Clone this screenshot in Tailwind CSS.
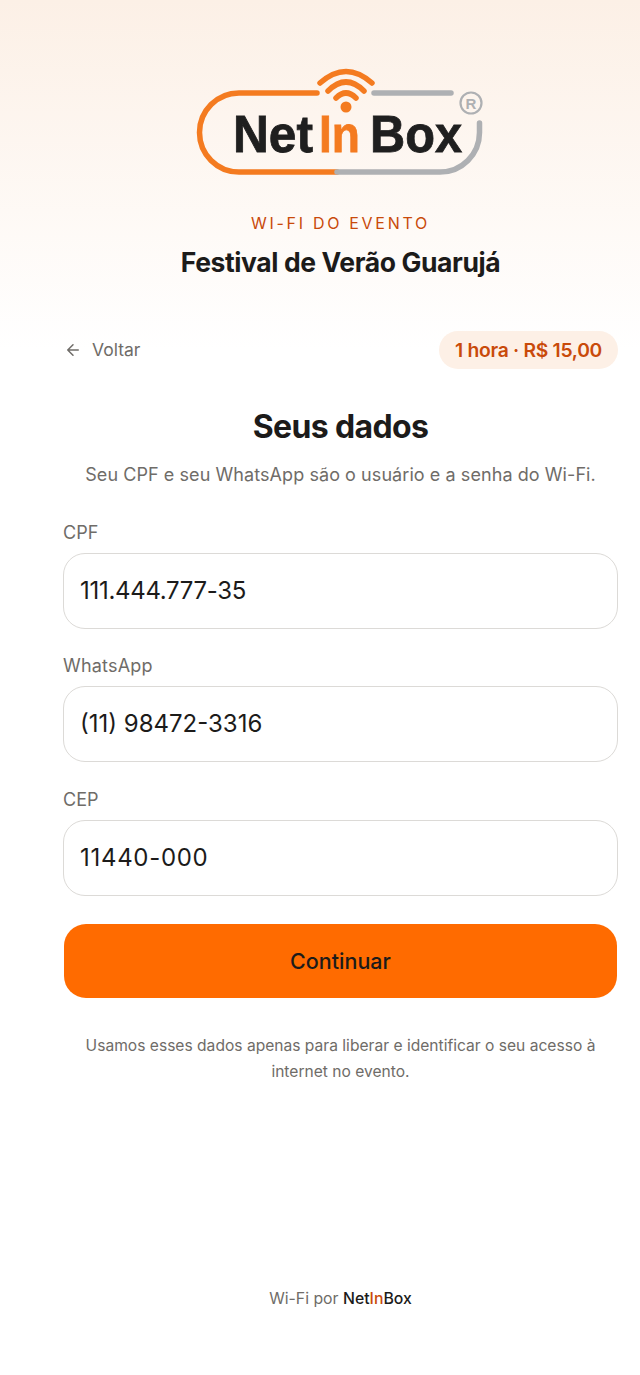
<!DOCTYPE html>
<html lang="pt-BR">
<head>
  <meta charset="UTF-8" />
  <meta name="viewport" content="width=device-width, initial-scale=1.0" />
  <title>NetInBox - Seus dados</title>
  <script src="https://cdn.jsdelivr.net/npm/@tailwindcss/browser@4"></script>
</head>
<body class="bg-white text-[#1c1b1a] font-['Inter',sans-serif]">
  <div class="min-h-[1375px] flex flex-col bg-gradient-to-b from-[#fcf0e6] to-white to-[350px] bg-no-repeat">
    <!-- HEADER -->
    <header class="pl-[63px] pr-[22px] flex flex-col items-center">
      <svg class="mt-[55px] w-[320px] h-[135px] ml-[-3px]" viewBox="180 55 320 135" fill="none" stroke-linecap="round">
        <path d="M318 93 H240 A39.500 39.500 0 0 0 240 172 H338" stroke="#f47b20" stroke-width="5.500" />
        <path d="M338 172 H441 A39.500 39.500 0 0 0 480.500 132.500 V123" stroke="#aeb0b3" stroke-width="5.500" />
        <path d="M375 93 H452" stroke="#aeb0b3" stroke-width="5.500" />
        <path d="M321 83 Q347 60 373 83" stroke="#f47b20" stroke-width="5.500" />
        <path d="M329 91 Q347 73 365 91" stroke="#f47b20" stroke-width="5.500" />
        <path d="M337 98 Q347 88 357 98" stroke="#f47b20" stroke-width="5.500" />
        <circle cx="347" cy="107" r="5.500" fill="#f47b20" />
        <circle cx="472" cy="103" r="10.500" stroke="#aeb0b3" stroke-width="2.200" />
        <text x="472" y="108.500" text-anchor="middle" font-family="'Liberation Sans',sans-serif" font-size="15" font-weight="700" fill="#aeb0b3">R</text>
        <text x="234" y="152" textLength="80" lengthAdjust="spacingAndGlyphs" font-family="'Liberation Sans',sans-serif" font-size="52" font-weight="700" fill="#1f1f1f" stroke="#1f1f1f" stroke-width="0.8">Net</text>
        <text x="320" y="152" textLength="41" lengthAdjust="spacingAndGlyphs" font-family="'Liberation Sans',sans-serif" font-size="52" font-weight="700" fill="#f47b20" stroke="#f47b20" stroke-width="0.8">In</text>
        <text x="371" y="152" textLength="92" lengthAdjust="spacingAndGlyphs" font-family="'Liberation Sans',sans-serif" font-size="52" font-weight="700" fill="#1f1f1f" stroke="#1f1f1f" stroke-width="0.8">Box</text>
      </svg>
      <p class="mt-[21px] text-[16px] leading-[24px] tracking-[2.7px] text-[#c94a0a]">WI-FI DO EVENTO</p>
      <h1 class="mt-[8.500px] text-[26.500px] leading-[36px] font-bold tracking-[-0.015em]">Festival de Verão Guarujá</h1>
    </header>

    <!-- BACK + PLAN -->
    <div class="mt-[51.500px] pl-[63px] pr-[22px] flex items-center justify-between">
      <a href="#" class="flex items-center gap-[10px] text-[17.500px] text-[#6f6c68]">
        <svg class="w-[18px] h-[18px] ml-px" viewBox="0 0 24 24" fill="none" stroke="currentColor" stroke-width="2" stroke-linecap="round" stroke-linejoin="round"><path d="M19 12H5M12 19l-7-7 7-7" /></svg>
        Voltar
      </a>
      <span class="h-[38px] px-[16px] rounded-full bg-[#fdf0e6] text-[#c94a0a] text-[19.300px] font-semibold tracking-[-0.015em] flex items-center">1 hora · R$ 15,00</span>
    </div>

    <!-- FORM -->
    <main class="mt-[36px] pl-[63px] pr-[22px] flex flex-col">
      <h2 class="text-center text-[32px] leading-[44px] font-bold tracking-[-0.02em]">Seus dados</h2>
      <p class="mt-[12px] text-center text-[18px] leading-[28px] tracking-[0.07px] text-[#6f6c68]">Seu CPF e seu WhatsApp são o usuário e a senha do Wi-Fi.</p>

      <label class="mt-[30px] text-[18px] leading-[28px] text-[#6f6c68]">CPF</label>
      <input type="text" value="111.444.777-35" class="mt-[6px] h-[75.500px] w-full px-[16px] rounded-[22px] border border-[#dcdad7] bg-white text-[24px] tracking-[-0.3px]" />

      <label class="mt-[23.500px] text-[18px] leading-[28px] tracking-[0.2px] text-[#6f6c68]">WhatsApp</label>
      <input type="text" value="(11) 98472-3316" class="mt-[6px] h-[75.500px] w-full px-[16px] rounded-[22px] border border-[#dcdad7] bg-white text-[24px]" />

      <label class="mt-[24.500px] text-[18px] leading-[28px] text-[#6f6c68]">CEP</label>
      <input type="text" value="11440-000" class="mt-[6px] h-[75.500px] w-full px-[16px] rounded-[22px] border border-[#dcdad7] bg-white text-[24px] tracking-[0.7px]" />

      <button class="mt-[28.500px] h-[73.500px] mx-px rounded-[22px] bg-[#ff6b00] text-[21.500px] font-medium">Continuar</button>

      <p class="mt-[35.500px] px-[20px] text-center text-[15.600px] leading-[26px] text-[#6f6c68]">Usamos esses dados apenas para liberar e identificar o seu acesso à internet no evento.</p>
    </main>

    <!-- FOOTER -->
    <footer class="mt-[201.500px] pl-[63px] pr-[22px] text-center text-[15.800px] leading-[24px] text-[#6f6c68]">
      Wi-Fi por <span class="font-medium text-[#1c1b1a]">Net<span class="text-[#c94a0a]">In</span>Box</span>
    </footer>
  </div>
</body>
</html>
